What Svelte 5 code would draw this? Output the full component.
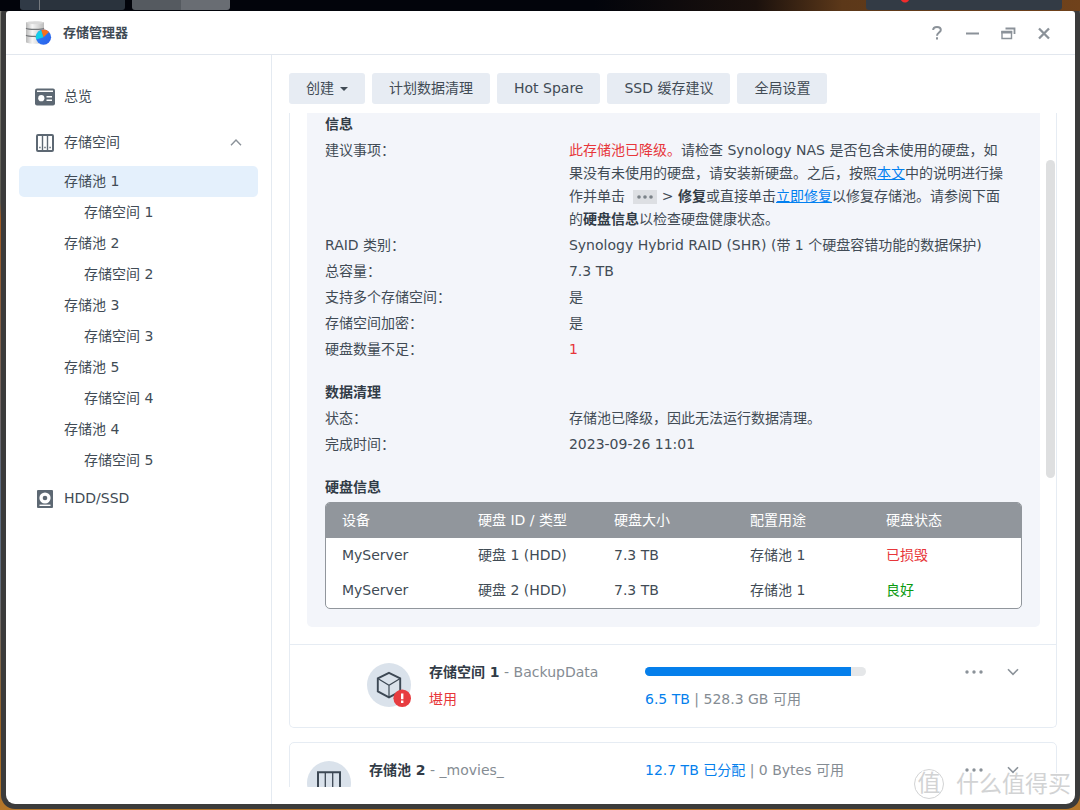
<script lang="ts">
  const pools = [
    { pool: '存储池 1', volume: '存储空间 1' },
    { pool: '存储池 2', volume: '存储空间 2' },
    { pool: '存储池 3', volume: '存储空间 3' },
    { pool: '存储池 5', volume: '存储空间 4' },
    { pool: '存储池 4', volume: '存储空间 5' },
  ];

  const actions = ['计划数据清理', 'Hot Spare', 'SSD 缓存建议', '全局设置'];

  const details = [
    { label: 'RAID 类别：', value: 'Synology Hybrid RAID (SHR) (带 1 个硬盘容错功能的数据保护)' },
    { label: '总容量：', value: '7.3 TB' },
    { label: '支持多个存储空间：', value: '是' },
    { label: '存储空间加密：', value: '是' },
    { label: '硬盘数量不足：', value: '1', bad: true },
  ];

  const columns = ['设备', '硬盘 ID / 类型', '硬盘大小', '配置用途', '硬盘状态'];

  const drives = [
    { device: 'MyServer', id: '硬盘 1 (HDD)', size: '7.3 TB', usage: '存储池 1', status: '已损毁', ok: false },
    { device: 'MyServer', id: '硬盘 2 (HDD)', size: '7.3 TB', usage: '存储池 1', status: '良好', ok: true },
  ];

  const used = 93;
  let selected = $state('存储池 1');
  let expanded = $state(true);
</script>

{#snippet rowButtons()}
  <div class="row-buttons">
    <button class="icon-btn" aria-label="更多">
      <svg width="18" height="6" viewBox="0 0 18 6" fill="#8b9299">
        <circle cx="2" cy="3" r="1.7" /><circle cx="9" cy="3" r="1.7" /><circle cx="16" cy="3" r="1.7" />
      </svg>
    </button>
    <button class="icon-btn" aria-label="展开">
      <svg width="12" height="8" viewBox="0 0 12 8" fill="none" stroke="#8b9299" stroke-width="1.6">
        <path d="M1 1.2 6 6.4 11 1.2" />
      </svg>
    </button>
  </div>
{/snippet}

<div class="desktop">
  <div class="taskbar">
    <span class="task wide"></span>
    <span class="task light"></span>
    <span class="tray"></span>
  </div>

  <div class="window">
    <header class="titlebar">
      <svg class="logo" width="28" height="26" viewBox="0 0 28 26">
        <defs>
          <linearGradient id="disk" x1="0" x2="1">
            <stop offset="0" stop-color="#b9b9b9" /><stop offset=".35" stop-color="#f6f6f6" /><stop offset="1" stop-color="#bcbcbc" />
          </linearGradient>
          <linearGradient id="pie" x1="0" x2="1" y1="0" y2="1">
            <stop offset="0" stop-color="#2c86fb" /><stop offset="1" stop-color="#2b5de8" />
          </linearGradient>
        </defs>
        <path d="M1 2.5C1 1 19 1 19 2.5V22c0 2.4-18 2.4-18 0z" fill="url(#disk)" />
        <ellipse cx="10" cy="2.8" rx="8.6" ry="1.5" fill="#d9d9d9" />
        <path d="M1 8.2c2 1.5 16 1.5 18 0M1 15.2c2 1.5 16 1.5 18 0" fill="none" stroke="#74777a" stroke-width="1.2" />
        <circle cx="18.5" cy="17.2" r="7.6" fill="url(#pie)" />
        <path d="M18.5 17.2 11.2 19.5A7.6 7.6 0 0 1 16.3 9.9z" fill="#12cfe8" />
        <path d="M18.5 17.2 16.3 9.9A7.6 7.6 0 0 1 24 12z" fill="#f7701d" />
      </svg>
      <h1>存储管理器</h1>
      <div class="controls">
        <button class="icon-btn" aria-label="帮助">
          <svg width="14" height="16" viewBox="0 0 14 16" fill="none" stroke="#8b9299" stroke-width="2">
            <path d="M3.2 5C3.2 .9 10.8 .9 10.8 5 10.8 7.5 7 7.7 7 10.8M7 12.2v2.2" />
          </svg>
        </button>
        <button class="icon-btn" aria-label="最小化">
          <svg width="14" height="16" viewBox="0 0 14 16"><path d="M1 8.5h13" stroke="#8b9299" stroke-width="2" /></svg>
        </button>
        <button class="icon-btn" aria-label="还原">
          <svg width="16" height="16" viewBox="0 0 16 16" fill="none" stroke="#8b9299">
            <path d="M5.5 3.5h9V9" stroke-width="1.8" />
            <path d="M2 6.5h9.5v7H2z" stroke-width="1.4" /><path d="M1.3 7.2h10.9" stroke-width="2.6" />
          </svg>
        </button>
        <button class="icon-btn" aria-label="关闭">
          <svg width="14" height="16" viewBox="0 0 14 16"><path d="m2 3.5 10 10M12 3.5l-10 10" stroke="#8b9299" stroke-width="2.3" /></svg>
        </button>
      </div>
    </header>

    <div class="body">
      <nav class="sidebar">
        <button class="nav-item top">
          <svg width="20" height="18" viewBox="0 0 20 18">
            <rect y=".5" width="20" height="17" rx="2" fill="#5d6873" />
            <path d="M2 3.2h16" stroke="#fff" stroke-width="1.5" />
            <circle cx="6.3" cy="10.2" r="3.1" fill="#fff" />
            <path d="M11.5 8.7H17M11.5 12.2H17" stroke="#fff" stroke-width="1.5" />
          </svg>
          总览
        </button>
        <button class="nav-item top" aria-expanded={expanded} onclick={() => (expanded = !expanded)}>
          <svg width="20" height="18" viewBox="0 0 20 18">
            <rect x="2" y="1" width="16" height="16" rx="1" fill="#fff" stroke="#5d6873" stroke-width="2" />
            <path d="M7.5 2v14M12.5 2v14" stroke="#5d6873" stroke-width="1.4" />
            <path d="M4.2 13.5h1.4M9.3 13.5h1.4M14.4 13.5h1.4" stroke="#5d6873" stroke-width="1.4" />
          </svg>
          存储空间
          <svg class="caret" width="12" height="8" viewBox="0 0 12 8" fill="none" stroke="#8b9299" stroke-width="1.4">
            <path d="M1 6.2 6 1 11 6.2" />
          </svg>
        </button>
        {#if expanded}
          <div class="tree">
            {#each pools as p}
              <button class="nav-item pool" class:active={selected === p.pool} onclick={() => (selected = p.pool)}>{p.pool}</button>
              <button class="nav-item volume" class:active={selected === p.volume} onclick={() => (selected = p.volume)}>{p.volume}</button>
            {/each}
          </div>
        {/if}
        <button class="nav-item">
          <svg width="20" height="18" viewBox="0 0 20 18">
            <rect x="2" width="16" height="18" rx="1" fill="#5d6873" />
            <circle cx="10" cy="8" r="5.6" fill="#fff" />
            <circle cx="10" cy="8" r="2.3" fill="#5d6873" />
            <path d="M4.5 15.3h11" stroke="#fff" stroke-width="1.4" />
          </svg>
          HDD/SSD
        </button>
      </nav>

      <main>
        <div class="toolbar">
          <button class="btn">
            创建
            <svg width="8" height="4" viewBox="0 0 8 4" fill="#414b55"><path d="M0 0h8L4 4z" /></svg>
          </button>
          {#each actions as action}
            <button class="btn">{action}</button>
          {/each}
        </div>

        <div class="scroll">
          <section class="card first">
            <div class="panel">
              <h2>信息</h2>
              <dl>
                <dt>建议事项：</dt>
                <dd>
                  <span class="bad">此存储池已降级。</span>请检查 Synology NAS 是否包含未使用的硬盘，如<br />
                  果没有未使用的硬盘，请安装新硬盘。之后，按照<a href="#article">本文</a>中的说明进行操<br />
                  作并单击 <span class="more"><svg width="16" height="4" viewBox="0 0 16 4" fill="#7b8288"><circle cx="2" cy="2" r="1.8" /><circle cx="8" cy="2" r="1.8" /><circle cx="14" cy="2" r="1.8" /></svg></span> &gt; <b>修复</b>或直接单击<a href="#repair">立即修复</a>以修复存储池。请参阅下面<br />
                  的<b>硬盘信息</b>以检查硬盘健康状态。
                </dd>
                {#each details as d}
                  <dt>{d.label}</dt>
                  <dd class:bad={d.bad}>{d.value}</dd>
                {/each}
              </dl>

              <h2>数据清理</h2>
              <dl>
                <dt>状态：</dt>
                <dd>存储池已降级，因此无法运行数据清理。</dd>
                <dt>完成时间：</dt>
                <dd>2023-09-26 11:01</dd>
              </dl>

              <h2>硬盘信息</h2>
              <table>
                <thead>
                  <tr>
                    {#each columns as c}<th>{c}</th>{/each}
                  </tr>
                </thead>
                <tbody>
                  {#each drives as d}
                    <tr>
                      <td>{d.device}</td>
                      <td>{d.id}</td>
                      <td>{d.size}</td>
                      <td>{d.usage}</td>
                      <td class={d.ok ? 'good' : 'bad'}>{d.status}</td>
                    </tr>
                  {/each}
                </tbody>
              </table>
            </div>

            <div class="row volume-row">
              <div class="name">
                <svg width="44" height="44" viewBox="0 0 44 44">
                  <circle cx="22" cy="22" r="22" fill="#dae2eb" />
                  <path d="m22 9.8 11.2 5.6v13L22 34.4l-11.2-6v-13z" fill="none" stroke="#3d4854" stroke-width="1.9" />
                  <path d="M10.8 15.6 22 22.2l11.2-6.6M22 22.2v12" fill="none" stroke="#3d4854" stroke-width="1.2" />
                  <circle cx="35.2" cy="35.2" r="8.8" fill="#e73c40" />
                  <path d="M35.2 30.6v5.6M35.2 37.6V40" stroke="#fff" stroke-width="2.4" />
                </svg>
                <div>
                  <p><b>存储空间 1</b> <span class="dim">- BackupData</span></p>
                  <p class="bad">堪用</p>
                </div>
              </div>
              <div class="usage">
                <div class="bar" role="progressbar" aria-label="已用空间" aria-valuenow={used}>
                  <div class="fill" style="width: {used}%"></div>
                </div>
                <p class="dim"><span class="blue">6.5 TB</span> | 528.3 GB 可用</p>
              </div>
              {@render rowButtons()}
            </div>
          </section>

          <section class="card">
            <div class="row">
              <div class="name">
                <svg width="44" height="44" viewBox="0 0 44 44">
                  <circle cx="22" cy="22" r="22" fill="#dae2eb" />
                  <path d="M11 33V11.2h22V33z" fill="none" stroke="#3d4854" stroke-width="2" />
                  <path d="M18.3 11v22M25.7 11v22" stroke="#3d4854" stroke-width="1.3" />
                  <path d="M14 27.6h1.8M21.1 27.6h1.8M28.4 27.6h1.8" stroke="#3d4854" stroke-width="1.5" />
                  <circle cx="35.2" cy="35.2" r="8.8" fill="#23b52c" />
                </svg>
                <div>
                  <p><b>存储池 2</b> <span class="dim">- _movies_</span></p>
                </div>
              </div>
              <div class="usage">
                <p class="dim"><span class="blue">12.7 TB 已分配</span> | 0 Bytes 可用</p>
              </div>
              {@render rowButtons()}
            </div>
          </section>
          <div class="thumb"></div>
        </div>
      </main>
    </div>
  </div>

  <div class="watermark"><span class="stamp">值</span>什么值得买</div>
</div>

<style>
  :global(body) { margin: 0; }
  .desktop {
    position: relative;
    box-sizing: border-box;
    height: 100vh;
    display: flex;
    flex-direction: column;
    padding: 0 5px 6px 3px;
    overflow: hidden;
    background: linear-gradient(#85847c, #5b5950 25%, #a05a22 27%, #5d6b80 60%, #626d7c 72%, #9b6425 90%, #b5772a);
    font: 14px/23px "DejaVu Sans", "Noto Sans CJK SC", sans-serif;
    color: #414b55;
  }
  button {
    border: 0;
    background: none;
    font: inherit;
    color: inherit;
    cursor: pointer;
  }
  h1, h2, p, dl, dd { margin: 0; }
  svg { display: block; flex: none; }
  a { color: #0180f0; }
  b { color: #323c47; }
  .bad { color: #e7363a; }
  .good { color: #0a9a10; }
  .blue { color: #0580ed; }
  .dim { color: #858c93; }

  .taskbar {
    display: flex;
    gap: 7px;
    height: 11px;
    margin: 0 -5px 0 -3px;
    padding: 0 18px 0 20px;
    background: linear-gradient(90deg, #02040b 55%, #1b110d 70%, #5c3819 78%, #70421b);
    z-index: 1;
  }
  .task {
    width: 98px;
    height: 10px;
    border-radius: 0 0 3px 3px;
  }
  .task.wide { width: 105px; background: linear-gradient(90deg, #303a46 18%, #75797e 18% 19%, #2a333d 19%); }
  .task.light { background: linear-gradient(90deg, #555a60 50%, #696d73 50%); }
  .tray {
    width: 196px;
    height: 10px;
    margin-left: auto;
    border-radius: 0 0 3px 3px;
    background: radial-gradient(circle at 39px -2px, #f12b2b 4px, #333b45 5px);
  }

  .window {
    flex: 1;
    min-height: 0;
    display: flex;
    flex-direction: column;
    margin-left: 3px;
    background: #fff;
    border-radius: 3px 3px 9px 9px;
    box-shadow: 0 0 0 5px #3b3b3b;
    overflow: hidden;
  }
  .titlebar {
    display: flex;
    align-items: center;
    height: 43px;
    padding: 0 24px 0 19px;
    border-bottom: 1px solid #e2e7ee;
  }
  h1 {
    margin-left: 10px;
    font-size: 13px;
    font-weight: 700;
  }
  .controls { display: flex; gap: 21px; margin-left: auto; }
  .icon-btn { padding: 0; }

  .body { flex: 1; min-height: 0; display: flex; }
  .sidebar {
    flex: none;
    box-sizing: border-box;
    width: 266px;
    padding: 26px 13px;
    border-right: 1px solid #e4eaf1;
  }
  .nav-item {
    display: flex;
    align-items: center;
    gap: 9px;
    width: 100%;
    height: 31px;
    padding: 0 16px;
    border-radius: 5px;
    text-align: left;
  }
  .nav-item.top + .top { margin-top: 15px; }
  .nav-item.pool { padding-left: 45px; }
  .nav-item.volume { padding-left: 65px; }
  .nav-item.active { background: #e4f0fc; }
  .caret { margin-left: auto; }
  .tree { padding: 8px 0 7px; }

  main {
    flex: 1;
    min-width: 0;
    display: flex;
    flex-direction: column;
    padding: 18px 18px 17px 17px;
  }
  .toolbar { display: flex; gap: 7px; padding-bottom: 9px; }
  .btn {
    display: flex;
    align-items: center;
    gap: 6px;
    height: 31px;
    padding: 0 17px;
    border-radius: 3px;
    background: #e7ecf3;
    white-space: nowrap;
  }

  .scroll { position: relative; flex: 1; min-height: 0; overflow: hidden; }
  .thumb {
    position: absolute;
    top: 47px;
    right: 2px;
    width: 9px;
    height: 318px;
    border-radius: 5px;
    background: #dedfe0;
  }
  .card {
    margin-bottom: 14px;
    border: 1px solid #e6ecf3;
    border-radius: 5px;
  }
  .card.first { border-top: 0; border-radius: 0 0 5px 5px; }
  .panel {
    margin: 0 16px 17px 17px;
    padding: 0 18px 18px;
    background: #f3f5fa;
    border-radius: 0 0 5px 5px;
  }
  h2 {
    padding-bottom: 3px;
    font-size: 14px;
    font-weight: 700;
    color: #323c47;
  }
  dl {
    display: grid;
    grid-template-columns: 35% 1fr;
    row-gap: 3px;
    padding-bottom: 20px;
    white-space: nowrap;
  }
  .more {
    display: inline-flex;
    align-items: center;
    height: 14px;
    margin-left: 4px;
    padding: 0 4px;
    background: #dddfe3;
    vertical-align: middle;
  }

  table {
    width: 100%;
    table-layout: fixed;
    border: 1px solid #91969c;
    border-radius: 5px;
    border-spacing: 0;
    background: #fff;
    overflow: hidden;
  }
  th, td {
    height: 35px;
    padding: 0 0 0 16px;
    text-align: left;
    font-weight: 400;
  }
  th { background: #91969c; color: #fff; }
  th:not(:last-child) { width: 120px; }

  .row {
    display: grid;
    grid-template-columns: 355px 1fr auto;
    padding: 18px 37px 18px 0;
  }
  .volume-row { border-top: 1px solid #e6ecf3; }
  .name { display: flex; gap: 18px; padding-left: 17px; }
  .volume-row .name { padding-left: 77px; }
  .name p + p { margin-top: 8px; }
  .name p, .usage p { line-height: 19px; }
  .bar {
    width: 221px;
    height: 9px;
    margin: 4px 0 14px;
    border-radius: 5px;
    background: #e5e7e9;
    overflow: hidden;
  }
  .fill { height: 100%; background: #057feb; }
  .row-buttons { display: flex; align-items: center; gap: 24px; height: 17px; }

  .watermark {
    position: absolute;
    right: 9px;
    bottom: 9px;
    display: flex;
    align-items: center;
    gap: 12px;
    font-size: 23px;
    line-height: 34px;
    color: #d2d3d4;
    text-shadow: -1px -1px 0 #fff;
    pointer-events: none;
  }
  .stamp {
    width: 28px;
    height: 28px;
    border: 1px solid #d2d3d4;
    border-radius: 50%;
    line-height: 26px;
    text-align: center;
  }
</style>
